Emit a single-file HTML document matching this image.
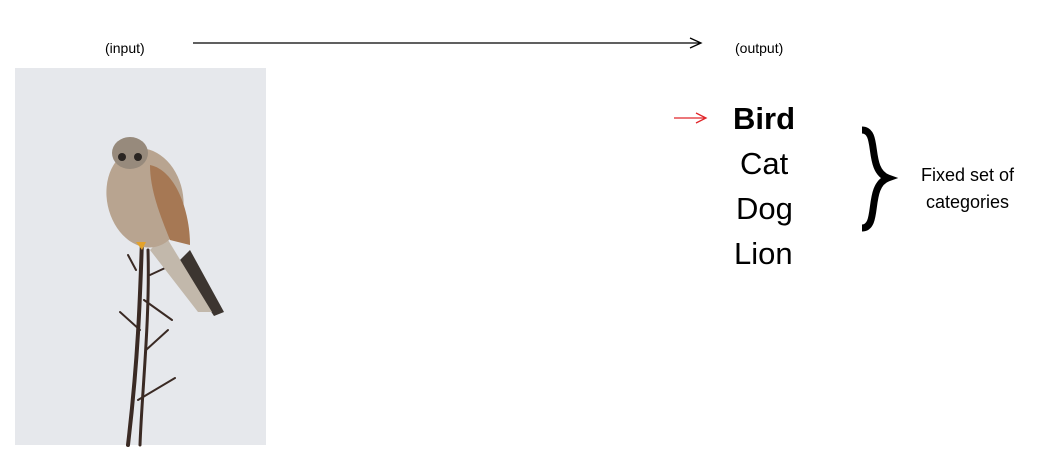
<!DOCTYPE html>
<html><head><style>
body{margin:0;width:1047px;height:456px;background:#fff;position:relative;overflow:hidden;font-family:"Liberation Sans",sans-serif;color:#000}
.t{position:absolute;white-space:nowrap}
</style></head><body>
<div class="t" style="left:105px;top:40px;font-size:14px">(input)</div>
<div class="t" style="left:735px;top:40px;font-size:14px">(output)</div>
<svg width="1047" height="456" style="position:absolute;left:0;top:0">
<line x1="193" y1="43" x2="700" y2="43" stroke="#000" stroke-width="1.3"/>
<path d="M690 38 L701 43 L690 48" fill="none" stroke="#000" stroke-width="1.3"/>
<line x1="674" y1="118" x2="705" y2="118" stroke="#e0262a" stroke-width="1.3"/>
<path d="M696 113 L706 118 L696 123" fill="none" stroke="#e0262a" stroke-width="1.3"/>
<rect x="15" y="68" width="251" height="377" fill="#e6e8ec"/>
<g stroke="#3a2a24" fill="none" stroke-linecap="round">
<path d="M142 240 C140 300 138 360 128 445" stroke-width="4"/>
<path d="M148 250 C150 320 142 390 140 445" stroke-width="3"/>
<path d="M144 300 L172 320 M140 330 L120 312 M146 350 L168 330 M138 400 L175 378 M136 270 L128 255 M150 275 L178 262" stroke-width="2"/>
</g>
<path d="M190 250 L224 312 L214 316 L178 262 Z" fill="#3c3530"/>
<path d="M165 235 L212 312 L198 312 L150 250 Z" fill="#c2b8ab"/>
<ellipse cx="145" cy="198" rx="38" ry="50" fill="#b8a490" transform="rotate(-12 145 198)"/>
<path d="M150 165 C175 170 190 210 190 245 L170 240 C160 215 150 190 150 165Z" fill="#a67854"/>
<ellipse cx="130" cy="153" rx="18" ry="16" fill="#978a7c"/>
<ellipse cx="122" cy="157" rx="4" ry="4" fill="#2a2522"/>
<ellipse cx="138" cy="157" rx="4" ry="4" fill="#2a2522"/>
<path d="M136 242 l6 8 l4 -8z" fill="#e3a22a"/>
<path d="M862 130 C880 130 866 170 888 178 C866 186 880 228 862 228" fill="none" stroke="#000" stroke-width="7"/>
</svg>
<div class="t" style="left:733px;top:101px;font-size:31px;font-weight:bold">Bird</div>
<div class="t" style="left:740px;top:146px;font-size:31px">Cat</div>
<div class="t" style="left:736px;top:191px;font-size:31px">Dog</div>
<div class="t" style="left:734px;top:236px;font-size:31px">Lion</div>
<div class="t" style="left:921px;top:162px;font-size:18px;text-align:center;line-height:27px">Fixed set of<br>categories</div>
</body></html>
